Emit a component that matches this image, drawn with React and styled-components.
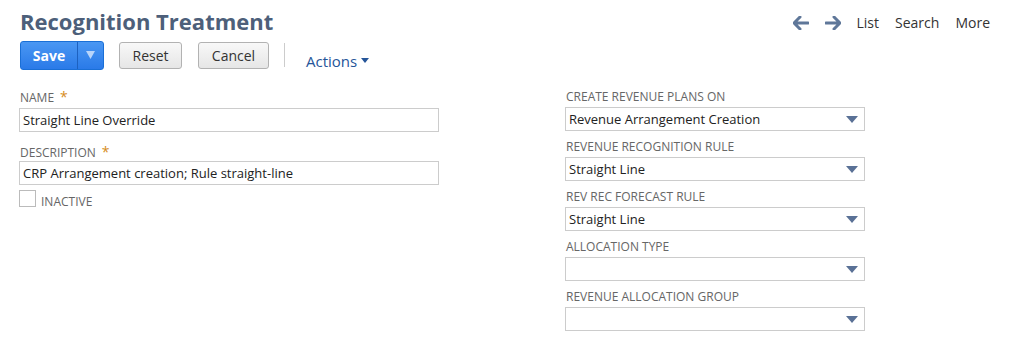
import React from "react";
import styled, { createGlobalStyle } from "styled-components";

const GlobalStyle = createGlobalStyle`
  body {
    margin: 0;
    background: #fff;
    font-family: "Open Sans", "Liberation Sans", sans-serif;
    color: #333;
  }
`;

const Page = styled.div`
  padding: 4px 24px 0 20px;
`;

const Header = styled.div`
  display: flex;
  justify-content: space-between;
  align-items: flex-start;
`;

const Title = styled.h1`
  margin: 0;
  font-size: 22px;
  font-weight: 700;
  color: #4d5f7a;
  line-height: 34px;
`;

const Nav = styled.div`
  display: flex;
  align-items: center;
  gap: 16px;
  padding-top: 9px;
  font-size: 14px;
  color: #333;
`;

const NavArrow = styled.svg`
  width: 16px;
  height: 14px;
`;

const Toolbar = styled.div`
  display: flex;
  align-items: center;
  margin-top: 3px;
  height: 28px;
`;

const SplitButton = styled.div`
  display: flex;
  height: 27px;
  border: 1px solid #1a6fd6;
  border-radius: 3px;
  background: linear-gradient(#4a97f3, #2a7ae8);
  color: #fff;
  font-size: 14px;
  font-weight: 700;
  overflow: hidden;
`;

const SplitMain = styled.div`
  width: 56px;
  display: flex;
  align-items: center;
  justify-content: center;
  border-right: 1px solid #1d61c0;
`;

const SplitArrow = styled.div`
  width: 25px;
  display: flex;
  align-items: center;
  justify-content: center;
`;

const Button = styled.button`
  margin-left: ${(p) => p.$gap || 15}px;
  height: 27px;
  width: ${(p) => p.$w}px;
  padding: 0;
  border: 1px solid #b2b2b2;
  border-radius: 3px;
  background: linear-gradient(#f8f8f8, #e6e6e6);
  font-family: inherit;
  font-size: 14px;
  color: #333;
`;

const Divider = styled.div`
  width: 1px;
  height: 24px;
  background: #ccc;
  margin: 0 21px 0 15px;
`;

const Actions = styled.div`
  display: flex;
  align-items: center;
  gap: 4px;
  margin-top: 11px;
  font-size: 15px;
  color: #255599;
`;

const Columns = styled.div`
  display: grid;
  grid-template-columns: 420px 300px;
  column-gap: 126px;
  margin-top: 20px;
`;

const Column = styled.div`
  display: flex;
  flex-direction: column;
`;

const Field = styled.div`
  display: flex;
  flex-direction: column;
  margin-bottom: ${(p) => p.$mb || 0}px;
`;

const Label = styled.div`
  font-size: 12px;
  color: #666;
  text-transform: uppercase;
  line-height: 16px;
  height: 16px;
  margin-bottom: ${(p) => p.$mb || 3}px;
  white-space: nowrap;
`;

const Star = styled.span`
  color: #d68c1c;
  margin-left: 6px;
  font-size: 14px;
`;

const TextBox = styled.div`
  box-sizing: border-box;
  height: 24px;
  width: ${(p) => p.$w || 420}px;
  margin-left: -1px;
  border: 1px solid #ccc;
  padding: 0 4px 0 3px;
  font-size: 13px;
  line-height: 22px;
  color: #222;
`;

const Select = styled(TextBox)`
  display: flex;
  align-items: center;
  justify-content: space-between;
  padding-right: 6px;
`;

const Caret = styled.svg`
  width: 12px;
  height: 7px;
`;

const CheckRow = styled.div`
  display: flex;
  align-items: center;
  gap: 5px;
  margin-left: -1px;
`;

const Checkbox = styled.div`
  box-sizing: border-box;
  width: 17px;
  height: 17px;
  border: 1px solid #bbb;
  background: #fff;
`;

const CheckLabel = styled.span`
  font-size: 12px;
  color: #666;
  text-transform: uppercase;
  margin-top: 6px;
`;

const Arrow = ({ dir }) => (
  <NavArrow viewBox="0 0 16 14">
    <path
      d={
        dir === "left"
          ? "M7 1 L1 7 L7 13 M1.5 7 H15"
          : "M9 1 L15 7 L9 13 M14.5 7 H1"
      }
      stroke="#5f7799"
      strokeWidth="3"
      fill="none"
      strokeLinejoin="round"
      strokeLinecap="round"
    />
  </NavArrow>
);

const DropCaret = () => (
  <Caret viewBox="0 0 12 7">
    <path d="M0 0 H12 L6 7 Z" fill="#5a7196" />
  </Caret>
);

const rightFields = [
  { label: "Create Revenue Plans On", value: "Revenue Arrangement Creation" },
  { label: "Revenue Recognition Rule", value: "Straight Line" },
  { label: "Rev Rec Forecast Rule", value: "Straight Line" },
  { label: "Allocation Type", value: "" },
  { label: "Revenue Allocation Group", value: "" },
];

export default function App() {
  return (
    <>
      <GlobalStyle />
      <Page>
        <Header>
          <Title>Recognition Treatment</Title>
          <Nav>
            <Arrow dir="left" />
            <Arrow dir="right" />
            <span>List</span>
            <span>Search</span>
            <span>More</span>
          </Nav>
        </Header>
        <Toolbar>
          <SplitButton>
            <SplitMain>Save</SplitMain>
            <SplitArrow>
              <svg width="9" height="8" viewBox="0 0 9 8">
                <path d="M0 0 H9 L4.5 8 Z" fill="#b9d5fa" />
              </svg>
            </SplitArrow>
          </SplitButton>
          <Button $w={63}>Reset</Button>
          <Button $w={71} $gap={16}>Cancel</Button>
          <Divider />
          <Actions>
            Actions
            <svg width="8" height="5" viewBox="0 0 8 5">
              <path d="M0 0 H8 L4 5 Z" fill="#255599" />
            </svg>
          </Actions>
        </Toolbar>
        <Columns>
          <Column>
            <Field $mb={12}>
              <Label $mb={3}>
                Name<Star>*</Star>
              </Label>
              <TextBox>Straight Line Override</TextBox>
            </Field>
            <Field $mb={2}>
              <Label $mb={1}>
                Description<Star>*</Star>
              </Label>
              <TextBox>CRP Arrangement creation; Rule straight-line</TextBox>
            </Field>
            <CheckRow>
              <Checkbox />
              <CheckLabel>Inactive</CheckLabel>
            </CheckRow>
          </Column>
          <Column>
            {rightFields.map((f) => (
              <Field key={f.label} $mb={8}>
                <Label $mb={2}>{f.label}</Label>
                <Select $w={300}>
                  <span>{f.value}</span>
                  <DropCaret />
                </Select>
              </Field>
            ))}
          </Column>
        </Columns>
      </Page>
    </>
  );
}
